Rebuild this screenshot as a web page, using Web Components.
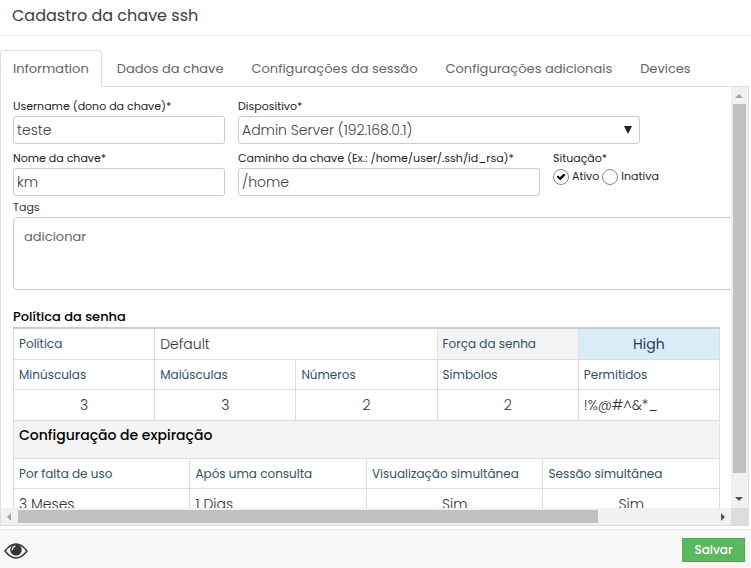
<!DOCTYPE html>
<html lang="pt-BR">
<head>
<meta charset="utf-8">
<title>Cadastro da chave ssh</title>
<style>
  html, body { height: 100%; margin: 0; }
  body { font: 13px/20px Poppins, Inter, "Open Sans", sans-serif; color: #4d5156; background: #fff; overflow: hidden; }
</style>
</head>
<body>
<key-dialog></key-dialog>

<script>
const define = (name, html, setup) => {
  const template = document.createElement('template');
  template.innerHTML = '<style>*{box-sizing:border-box}</style>' + html;
  customElements.define(name, class extends HTMLElement {
    constructor() {
      super();
      this.attachShadow({ mode: 'open' }).append(template.content.cloneNode(true));
    }
    connectedCallback() {
      if (setup) setup(this, this.shadowRoot);
    }
  });
};

define('dialog-title', `
<style>
  :host { display: block; padding: 3px 12px 6px; border-bottom: 1px solid #ebebeb; }
  h1 { margin: 0; font-size: 16px; line-height: 26px; font-weight: 400; color: #3a3d42; }
</style>
<h1><slot></slot></h1>`);

define('tab-item', `
<style>
  :host { display: block; margin-bottom: -1px; }
  button { height: 37px; padding: 0 12px; border: 1px solid transparent; border-radius: 4px 4px 0 0;
    background: none; font: inherit; font-size: 13px; color: #626568; white-space: nowrap; }
  :host([active]) button { background: #fff; border-color: #ddd; border-bottom-color: #fff; }
</style>
<button type="button" role="tab"><slot></slot></button>`, (host, root) => {
  root.querySelector('button').setAttribute('aria-selected', host.hasAttribute('active'));
});

define('tab-bar', `
<style>
  :host { display: flex; gap: 2px; margin-top: 14px; border-bottom: 1px solid #ddd; margin-right: 2px; }
</style>
<slot></slot>`);

define('text-field', `
<style>
  :host { display: block; min-width: 0; }
  label { display: block; font-size: 11px; line-height: 20px; color: #222; white-space: nowrap; }
  input { display: block; width: 100%; height: 28px; padding: 0 3px; border: 1px solid #ccc; border-radius: 3px;
    background: #fff; font: inherit; font-size: 14px; font-weight: 300; color: #444; }
</style>
<label for="control"></label><input id="control" type="text">`, (host, root) => {
  root.querySelector('label').textContent = host.getAttribute('label');
  root.querySelector('input').value = host.getAttribute('value');
});

define('select-field', `
<style>
  :host { display: block; min-width: 0; }
  label { display: block; font-size: 11px; line-height: 20px; color: #222; }
  div { display: grid; align-items: center; }
  select, svg { grid-area: 1 / 1; }
  select { appearance: none; width: 100%; height: 28px; padding: 0 3px; border: 1px solid #ccc; border-radius: 3px;
    background: #fff; font: inherit; font-size: 14px; font-weight: 300; color: #444; }
  svg { justify-self: end; margin-right: 8px; pointer-events: none; }
</style>
<label for="control"></label>
<div><select id="control"><option></option></select>
<svg width="8" height="8" viewBox="0 0 8 8"><path d="M0 0h8L4 8z" fill="#222"/></svg></div>`, (host, root) => {
  root.querySelector('label').textContent = host.getAttribute('label');
  root.querySelector('option').textContent = host.getAttribute('value');
});

define('status-field', `
<style>
  :host { display: block; font-size: 11px; line-height: 20px; color: #222; }
  fieldset { margin: 0; padding: 0; border: 0; }
  legend { padding: 0; }
  div { display: flex; gap: 3px; white-space: nowrap; }
  label { display: flex; gap: 3px; line-height: 16px; }
  input { appearance: none; display: grid; place-items: center; flex: none; width: 16px; height: 16px; margin: 1px 0 0;
    border: 1px solid #888; border-radius: 50%; background: #fff; }
  input:checked::before { content: ""; width: 9px; height: 7px; background: #000;
    clip-path: polygon(0 45%, 18% 30%, 38% 52%, 84% 0, 100% 20%, 42% 100%); }
</style>
<fieldset><legend>Situação*</legend>
<div><label><input type="radio" name="status" checked>Ativo</label><label><input type="radio" name="status">Inativa</label></div>
</fieldset>`);

define('tags-field', `
<style>
  :host { display: block; }
  label { display: block; font-size: 11px; line-height: 20px; padding-top: 1px; color: #333; }
  textarea { display: block; width: 120%; height: 73px; padding: 9px 10px; border: 1px solid #ccc; border-radius: 4px;
    resize: none; background: #fff; font: inherit; font-size: 13px; color: #666; }
  textarea::placeholder { color: #666; }
</style>
<label for="tags">Tags</label><textarea id="tags" placeholder="adicionar"></textarea>`);

define('policy-table', `
<style>
  :host { display: block; padding-top: 17px; }
  h2 { margin: 0; font-size: 13px; line-height: 20px; font-weight: 500; color: #000; }
  table { width: 100%; border-collapse: collapse; table-layout: fixed; }
  th, td { height: 30px; padding: 0 5px; border: 1px solid #ddd; text-align: left; white-space: nowrap; }
  .top > * { height: 31px; border-top: 2px solid #ccc; }
  .values > * { height: 31px; }
  th { padding-top: 1px; font-size: 12px; font-weight: 400; color: #34505f; }
  td { font-size: 14px; font-weight: 300; color: #333; }
  .num { text-align: center; }
  .shade { background: #f4f4f4; }
  .strength { background: #d9edf7; color: #1f4257; text-align: center; font-weight: 400; }
  .section { height: 38px; padding-bottom: 9px; background: #f4f4f4; font-size: 14px; font-weight: 500; color: #000; }
</style>
<h2 id="title">Política da senha</h2>
<table aria-labelledby="title">
  <colgroup><col span="20"></colgroup>
  <tr class="top"><th colspan="4">Política</th><td colspan="8">Default</td><th colspan="4" class="shade">Força da senha</th><td colspan="4" class="strength">High</td></tr>
  <tr><th colspan="4">Minúsculas</th><th colspan="4">Maiúsculas</th><th colspan="4">Números</th><th colspan="4">Símbolos</th><th colspan="4">Permitidos</th></tr>
  <tr class="values"><td colspan="4" class="num">3</td><td colspan="4" class="num">3</td><td colspan="4" class="num">2</td><td colspan="4" class="num">2</td><td colspan="4">!%@#^&amp;*_</td></tr>
  <tr><th colspan="20" class="section">Configuração de expiração</th></tr>
  <tr><th colspan="5">Por falta de uso</th><th colspan="5">Após uma consulta</th><th colspan="5">Visualização simultânea</th><th colspan="5">Sessão simultânea</th></tr>
  <tr class="values"><td colspan="5">3 Meses</td><td colspan="5">1 Dias</td><td colspan="5" class="num">Sim</td><td colspan="5" class="num">Sim</td></tr>
</table>`);

define('key-form', `
<style>
  :host { display: block; padding: 9px 11px 0 12px; }
  .row { display: grid; column-gap: 13px; }
  .first { grid-template-columns: 212fr 402fr 67fr; margin-bottom: 4px; }
  .second { grid-template-columns: 212fr 302fr 167fr; }
</style>
<div class="row first">
  <text-field label="Username (dono da chave)*" value="teste"></text-field>
  <select-field label="Dispositivo*" value="Admin Server (192.168.0.1)"></select-field>
</div>
<div class="row second">
  <text-field label="Nome da chave*" value="km"></text-field>
  <text-field label="Caminho da chave (Ex.: /home/user/.ssh/id_rsa)*" value="/home"></text-field>
  <status-field></status-field>
</div>
<tags-field></tags-field>
<policy-table></policy-table>`);

define('scroll-rail', `
<style>
  :host { display: flex; align-items: center; background: #f1f1f1; }
  :host([vertical]) { flex-direction: column; }
  svg { flex: none; width: 17px; height: 17px; }
  .track { flex: 1; align-self: stretch; padding: 2px 0; min-height: 0; }
  .thumb { width: 83.3%; height: 100%; background: #c1c1c1; }
  :host([vertical]) .track { padding: 0 2px; }
  :host([vertical]) .thumb { width: 100%; height: 95.3%; }
  .back { fill: #a3a3a3; }
  .on { fill: #505050; }
  .v { display: none; }
  :host([vertical]) .v { display: block; }
  :host([vertical]) .h { display: none; }
</style>
<svg class="back h" viewBox="0 0 17 17"><path d="M10 5v8L6 9z"/></svg>
<svg class="back v" viewBox="0 0 17 17"><path d="M4 11h8L8 7z"/></svg>
<div class="track"><div class="thumb"></div></div>
<svg class="on h" viewBox="0 0 17 17"><path d="M7 5v8l4-4z"/></svg>
<svg class="on v" viewBox="0 0 17 17"><path d="M4 6h8l-4 4z"/></svg>`);

define('scroll-pane', `
<style>
  :host { display: grid; grid-template: minmax(0, 1fr) 17px / minmax(0, 1fr) 17px; min-height: 0;
    margin: 0 2px 3px 0; border: 1px solid #ddd; border-top: 0; }
  .view { overflow: hidden; }
  .corner { background: #dcdcdc; }
</style>
<div class="view"><slot></slot></div>
<scroll-rail vertical></scroll-rail>
<scroll-rail></scroll-rail>
<div class="corner"></div>`);

define('dialog-footer', `
<style>
  :host { display: flex; align-items: center; justify-content: space-between; height: 39px; padding: 2px 6px 0 4px;
    border-top: 1px solid #e8e8e8; background: #f8f8f8; }
  button { border: 0; font: inherit; }
  .view { display: flex; padding: 2px 0 0; background: none; }
  .save { width: 63px; height: 24px; padding: 0; border: 1px solid #4cae4c; background: #5cb85c; color: #fff; font-size: 12px; font-weight: 500; }
</style>
<button type="button" class="view" aria-label="Visualizar">
  <svg width="24" height="16" viewBox="0 0 24 16">
    <path d="M1 8C5 2.800 8.300 1 12 1s7 1.800 11 7c-4 5.200-7.300 7-11 7S5 13.200 1 8z" fill="#fff" stroke="#35363b" stroke-width="1.600"/>
    <circle cx="12" cy="7" r="5.800" fill="#35363b"/>
    <path d="M8.300 6.500A4 4 0 0 1 11 3.200" fill="none" stroke="#fff" stroke-width="1.300" stroke-linecap="round"/>
  </svg>
</button>
<button type="button" class="save">Salvar</button>`);

define('key-dialog', `
<style>
  :host { display: grid; grid-template-rows: auto auto minmax(0, 1fr) auto; height: 100vh; }
</style>
<dialog-title>Cadastro da chave ssh</dialog-title>
<tab-bar role="tablist">
  <tab-item active>Information</tab-item>
  <tab-item>Dados da chave</tab-item>
  <tab-item>Configurações da sessão</tab-item>
  <tab-item>Configurações adicionais</tab-item>
  <tab-item>Devices</tab-item>
</tab-bar>
<scroll-pane><key-form></key-form></scroll-pane>
<dialog-footer></dialog-footer>`);
</script>
</body>
</html>
